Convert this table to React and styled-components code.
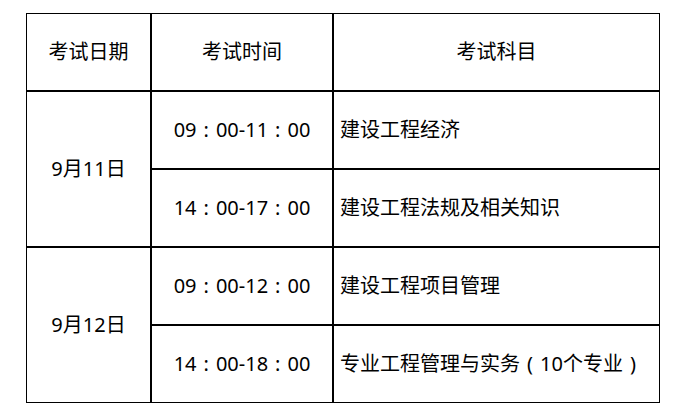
import React from "react";
import styled, { createGlobalStyle } from "styled-components";

const GlobalStyle = createGlobalStyle`
  html, body {
    margin: 0;
    padding: 0;
    background: #ffffff;
  }
  body {
    font-family: "Noto Sans", "Noto Sans CJK SC", sans-serif;
    color: #000000;
  }
`;

const Page = styled.div`
  padding: 13px 0 0 26px;
`;

const Table = styled.div`
  display: grid;
  grid-template-columns: 123px 180px 325px;
  grid-template-rows: repeat(5, 76px);
  gap: 2px;
  width: max-content;
  background: #000000;
  border: 1px solid #000000;
`;

const Cell = styled.div`
  background: #ffffff;
  display: flex;
  align-items: center;
  justify-content: ${(p) => (p.$left ? "flex-start" : "center")};
  padding: ${(p) => (p.$left ? "0 0 0 6px" : "0")};
  font-size: 20px;
  line-height: 1;
  white-space: nowrap;
  word-spacing: ${(p) => (p.$time ? "1.8px" : "normal")};
  grid-row: ${(p) => (p.$span ? `span ${p.$span}` : "auto")};
`;

const Paren = styled.span`
  display: inline-block;
  width: 1em;
  text-align: center;
`;

const rows = [
  {
    date: "9月11日",
    items: [
      ["09 : 00-11 : 00", "建设工程经济"],
      ["14 : 00-17 : 00", "建设工程法规及相关知识"],
    ],
  },
  {
    date: "9月12日",
    items: [
      ["09 : 00-12 : 00", "建设工程项目管理"],
      [
        "14 : 00-18 : 00",
        <>
          专业工程管理与实务<Paren>(</Paren>10个专业<Paren>)</Paren>
        </>,
      ],
    ],
  },
];

export default function App() {
  return (
    <>
      <GlobalStyle />
      <Page>
        <Table>
          <Cell>考试日期</Cell>
          <Cell>考试时间</Cell>
          <Cell>考试科目</Cell>
          {rows.map((r) => (
            <React.Fragment key={r.date}>
              <Cell $span={2}>{r.date}</Cell>
              <Cell $time>{r.items[0][0]}</Cell>
              <Cell $left>{r.items[0][1]}</Cell>
              <Cell $time>{r.items[1][0]}</Cell>
              <Cell $left>{r.items[1][1]}</Cell>
            </React.Fragment>
          ))}
        </Table>
      </Page>
    </>
  );
}
